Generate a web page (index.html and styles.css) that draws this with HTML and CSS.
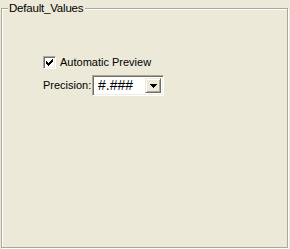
FILE: index.html
```html
<!DOCTYPE html>
<html>
<head>
<meta charset="utf-8">
<link rel="stylesheet" href="styles.css">
</head>
<body>
<div class="group">
  <span class="legend">Default_Values</span>
  <div class="content">
    <label class="check-row">
      <span class="checkbox">
        <svg width="9" height="9" viewBox="0 0 9 9" shape-rendering="crispEdges">
          <rect x="1" y="3" width="1" height="3" fill="#000"/>
          <rect x="2" y="4" width="1" height="3" fill="#000"/>
          <rect x="3" y="5" width="1" height="3" fill="#000"/>
          <rect x="4" y="4" width="1" height="3" fill="#000"/>
          <rect x="5" y="3" width="1" height="3" fill="#000"/>
          <rect x="6" y="2" width="1" height="3" fill="#000"/>
          <rect x="7" y="1" width="1" height="3" fill="#000"/>
        </svg>
      </span>
      <span class="text">Automatic Preview</span>
    </label>
    <div class="field-row">
      <span class="text">Precision:</span>
      <div class="combo">
        <span class="combo-value">#.###</span>
        <span class="combo-btn">
          <svg width="7" height="4" viewBox="0 0 7 4" shape-rendering="crispEdges">
            <rect x="0" y="0" width="7" height="1" fill="#000"/>
            <rect x="1" y="1" width="5" height="1" fill="#000"/>
            <rect x="2" y="2" width="3" height="1" fill="#000"/>
            <rect x="3" y="3" width="1" height="1" fill="#000"/>
          </svg>
        </span>
      </div>
    </div>
  </div>
</div>
</body>
</html>
```
FILE: styles.css
```css
html, body {
  margin: 0;
  padding: 0;
  background: #ece9d8;
}
body {
  width: 290px;
  height: 249px;
  overflow: hidden;
  font-family: "Liberation Sans", Arial, sans-serif;
  font-size: 11px;
  color: #000;
}
.group {
  position: relative;
  box-sizing: border-box;
  margin: 8px 0 0 1px;
  width: 287px;
  height: 240px;
  border: 1px solid #aca899;
  box-shadow: 1px 1px 0 #ffffff, inset 1px 1px 0 #ffffff;
}
.legend {
  position: absolute;
  left: 6px;
  top: -8px;
  padding: 0 2px 0 1px;
  line-height: 14px;
  font-size: 11.5px;
  letter-spacing: -0.2px;
  background: #ece9d8;
}
.content {
  padding: 47px 0 0 41px;
  display: flex;
  flex-direction: column;
  gap: 6px;
}
.check-row {
  display: flex;
  align-items: center;
  gap: 4px;
  height: 13px;
}
.checkbox {
  box-sizing: border-box;
  width: 13px;
  height: 13px;
  background: #fff;
  border-top: 1px solid #aca899;
  border-left: 1px solid #aca899;
  border-right: 1px solid #fff;
  border-bottom: 1px solid #fff;
  box-shadow: inset 1px 1px 0 #716f64, inset -1px -1px 0 #f1efe2;
  display: flex;
  align-items: center;
  justify-content: center;
}
.checkbox svg {
  display: block;
}
.text {
  line-height: 13px;
  white-space: nowrap;
}
.field-row {
  display: flex;
  align-items: center;
  gap: 2px;
}
.field-row .text {
  width: 47px;
}
.combo {
  box-sizing: border-box;
  width: 72px;
  height: 21px;
  background: #fff;
  border-top: 1px solid #aca899;
  border-left: 1px solid #aca899;
  border-right: 1px solid #fff;
  border-bottom: 1px solid #fff;
  box-shadow: inset 1px 1px 0 #716f64, inset -1px -1px 0 #f1efe2;
  display: flex;
  align-items: center;
  padding: 2px;
}
.combo-value {
  flex: 1;
  padding-left: 3px;
  font-size: 14px;
  line-height: 15px;
}
.combo-btn {
  box-sizing: border-box;
  width: 16px;
  align-self: stretch;
  background: #ece9d8;
  border-top: 1px solid #ece9d8;
  border-left: 1px solid #ece9d8;
  border-right: 1px solid #716f64;
  border-bottom: 1px solid #716f64;
  box-shadow: inset 1px 1px 0 #fff, inset -1px -1px 0 #aca899;
  display: flex;
  align-items: center;
  justify-content: center;
}
.combo-btn svg {
  display: block;
}
```
